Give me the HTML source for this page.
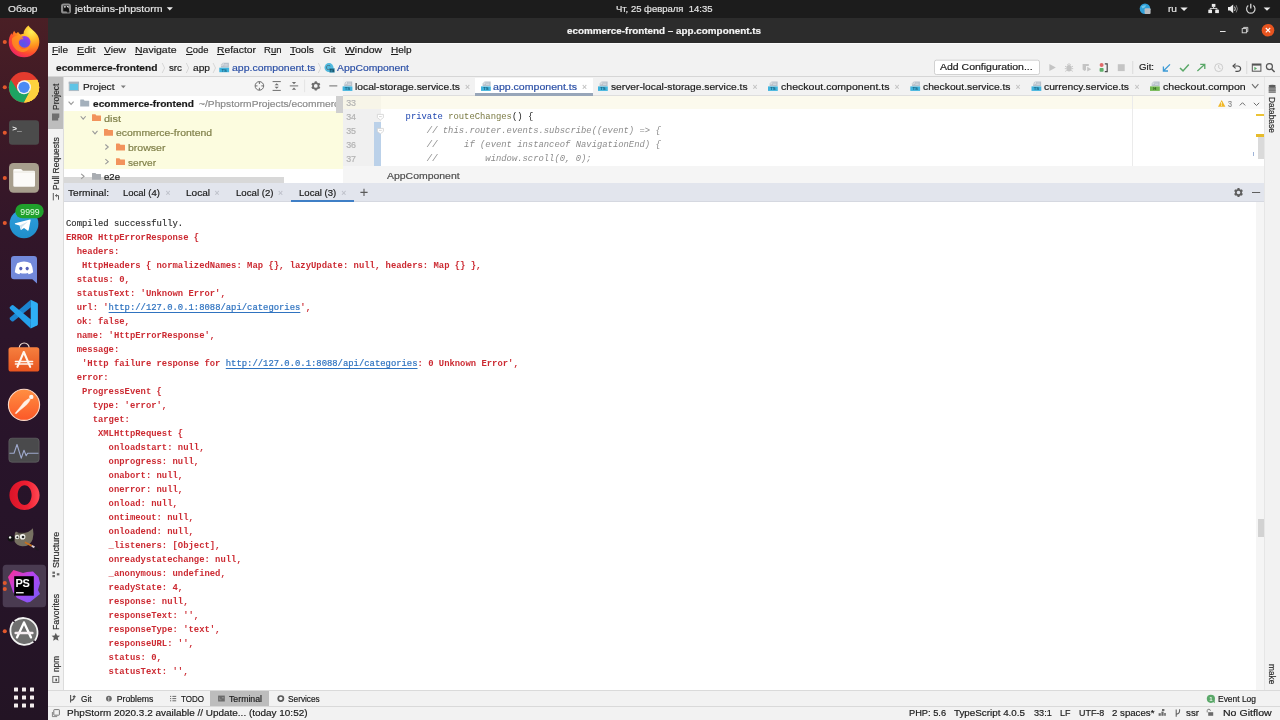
<!DOCTYPE html>
<html><head><meta charset="utf-8">
<style>
html,body{margin:0;padding:0;width:1280px;height:720px;overflow:hidden;background:#f2f2f2;}
body{font-family:"Liberation Sans","DejaVu Sans",sans-serif;font-size:11px;color:#1a1a1a;position:relative;-webkit-text-stroke:0.18px currentColor;}
.a{position:absolute;white-space:nowrap;}
.b{position:absolute;}
svg{position:absolute;overflow:visible;}
u{text-decoration:underline;text-underline-offset:1px;text-decoration-thickness:1px;}
#term{left:66px;top:217px;font-family:"Liberation Mono","DejaVu Sans Mono",monospace;font-weight:bold;font-size:8.89px;line-height:14px;color:#cc2a32;white-space:pre;margin:0;-webkit-text-stroke:0;}
#term .k{color:#2e2e2e;font-weight:normal;-webkit-text-stroke:0.15px #2e2e2e;}
#term .l{color:#2f73c0;font-weight:normal;text-decoration:underline;text-underline-offset:1.5px;-webkit-text-stroke:0.2px #2f73c0;}
#code{left:384.3px;top:110px;font-family:"Liberation Mono","DejaVu Sans Mono",monospace;font-size:8.87px;line-height:14px;color:#1a1a1a;white-space:pre;margin:0;-webkit-text-stroke:0;}
#code .c{color:#8c8c8c;font-style:italic;}
#code .kw{color:#1f46b0;}
#code .fn{color:#7a7a43;}
</style></head><body><div class="b" id="root" style="left:0;top:0;width:1280px;height:720px;overflow:hidden;will-change:transform;">
<div class="b" style="left:0px;top:0px;width:1280.00px;height:18.00px;background:#1c1c1c;"></div>
<div class="b" style="left:0px;top:18px;width:48.00px;height:702.00px;background:linear-gradient(rgb(74,31,37) 0%,rgb(61,25,38) 15%,rgb(50,22,41) 30%,rgb(44,21,42) 45%,rgb(40,20,42) 60%,rgb(38,20,40) 80%,rgb(35,20,36) 100%);"></div>
<div class="b" style="left:48px;top:18px;width:1232.00px;height:24.60px;background:#2c2c2c;"></div>
<div class="b" style="left:48px;top:42.6px;width:1232.00px;height:677.40px;background:#f2f2f2;"></div>
<div class="b" style="left:48px;top:42.6px;width:1232.00px;height:0.70px;background:#fafafa;"></div>
<div class="b" style="left:48px;top:76px;width:1232.00px;height:1.00px;background:#d6d6d6;"></div>
<div class="b" style="left:48px;top:77px;width:15.00px;height:613.30px;background:#f2f2f2;"></div>
<div class="b" style="left:63px;top:77px;width:1.00px;height:613.30px;background:#dcdcdc;"></div>
<div class="b" style="left:48px;top:77px;width:15.00px;height:52.20px;background:#bdbdbd;"></div>
<div class="b" style="left:64px;top:77px;width:278.50px;height:19.00px;background:#f5f5f5;"></div>
<div class="b" style="left:64px;top:96px;width:278.50px;height:87.00px;background:#ffffff;"></div>
<div class="b" style="left:64px;top:110.67px;width:278.50px;height:58.66px;background:#fcfcdf;"></div>
<div class="b" style="left:64px;top:177.4px;width:220.00px;height:5.90px;background:#d8d8d8;"></div>
<div class="b" style="left:342.5px;top:77px;width:0.80px;height:106.00px;background:#dcdcdc;"></div>
<div class="b" style="left:343.3px;top:77px;width:921.70px;height:19.00px;background:#f2f2f2;"></div>
<div class="b" style="left:474.5px;top:77.8px;width:118.00px;height:18.20px;background:#ffffff;"></div>
<div class="b" style="left:343.3px;top:95px;width:921.70px;height:1.00px;background:#dedede;"></div>
<div class="b" style="left:474.5px;top:93px;width:118.00px;height:3.00px;background:#98a6b9;"></div>
<div class="b" style="left:343.3px;top:96px;width:37.70px;height:70.40px;background:#f0f0f0;"></div>
<div class="b" style="left:381px;top:96px;width:883.20px;height:70.40px;background:#ffffff;"></div>
<div class="b" style="left:343.3px;top:96px;width:37.70px;height:13.00px;background:#f7f5e8;"></div>
<div class="b" style="left:381px;top:96px;width:830.00px;height:13.00px;background:#fcfaed;"></div>
<div class="b" style="left:1211px;top:96px;width:53.20px;height:13.00px;background:#f8f8f8;"></div>
<div class="b" style="left:1131.5px;top:96px;width:0.80px;height:70.40px;background:#ebebeb;"></div>
<div class="b" style="left:374.1px;top:122.4px;width:6.50px;height:44.00px;background:#bbd1e9;"></div>
<div class="b" style="left:1255.6px;top:114.3px;width:8.60px;height:1.90px;background:#ecc335;"></div>
<div class="b" style="left:1255.6px;top:134.1px;width:8.60px;height:3.00px;background:#e6bb2b;"></div>
<div class="b" style="left:1258px;top:137.1px;width:6.20px;height:22.20px;background:#dadada;"></div>
<div class="b" style="left:1252.5px;top:151.7px;width:0.80px;height:4.20px;background:#9fb4d8;"></div>
<div class="b" style="left:343.3px;top:166.4px;width:921.70px;height:16.60px;background:#f5f5f5;"></div>
<div class="b" style="left:64px;top:183px;width:1201.00px;height:19.00px;background:#e2e5ed;"></div>
<div class="b" style="left:64px;top:201.3px;width:1201.00px;height:0.70px;background:#d5d8e0;"></div>
<div class="b" style="left:290.5px;top:199.6px;width:63.50px;height:2.40px;background:#3f7fc6;"></div>
<div class="b" style="left:64px;top:202px;width:1191.50px;height:488.30px;background:#ffffff;"></div>
<div class="b" style="left:1255.5px;top:202px;width:8.70px;height:488.30px;background:#f5f5f5;"></div>
<div class="b" style="left:1258px;top:518.7px;width:6.60px;height:18.20px;background:#d2d2d2;"></div>
<div class="b" style="left:1264.2px;top:77px;width:0.80px;height:613.30px;background:#e6e6e6;"></div>
<div class="b" style="left:1265px;top:77px;width:15.00px;height:613.30px;background:#f2f2f2;"></div>
<div class="b" style="left:48px;top:690.2px;width:1232.00px;height:0.80px;background:#dadada;"></div>
<div class="b" style="left:210.2px;top:691px;width:58.80px;height:15.00px;background:#bdbdbd;"></div>
<div class="b" style="left:48px;top:706px;width:1232.00px;height:0.80px;background:#d9d9d9;"></div>
<div class="b" style="left:0;top:0;width:1280px;height:166.5px;overflow:hidden;"><pre class="a" id="code">    <span class="kw">private</span> <span class="fn">routeChanges</span>() {
        <span class="c">// this.router.events.subscribe((event) =&gt; {</span>
        <span class="c">//     if (event instanceof NavigationEnd) {</span>
        <span class="c">//         window.scroll(0, 0);</span></pre></div>
<pre class="a" id="term"><span class="k">Compiled successfully.</span>
ERROR HttpErrorResponse {
  headers:
   HttpHeaders { normalizedNames: Map {}, lazyUpdate: null, headers: Map {} },
  status: 0,
  statusText: 'Unknown Error',
  url: '<span class="l">http://127.0.0.1:8088/api/categories</span>',
  ok: false,
  name: 'HttpErrorResponse',
  message:
   'Http failure response for <span class="l">http://127.0.0.1:8088/api/categories</span>: 0 Unknown Error',
  error:
   ProgressEvent {
     type: 'error',
     target:
      XMLHttpRequest {
        onloadstart: null,
        onprogress: null,
        onabort: null,
        onerror: null,
        onload: null,
        ontimeout: null,
        onloadend: null,
        _listeners: [Object],
        onreadystatechange: null,
        _anonymous: undefined,
        readyState: 4,
        response: null,
        responseText: '',
        responseType: 'text',
        responseURL: '',
        status: 0,
        statusText: '',</pre>
<svg style="left:0px;top:0px" width="48" height="720" viewBox="0 0 48 720">
<defs>
<radialGradient id="ffg" cx="0.74" cy="0.2" r="0.98"><stop offset="0" stop-color="#fff25a"/><stop offset="0.24" stop-color="#ffc42f"/><stop offset="0.48" stop-color="#ff8c1e"/><stop offset="0.7" stop-color="#ff4d2e"/><stop offset="0.88" stop-color="#f02a5c"/><stop offset="1" stop-color="#d81f7c"/></radialGradient>
<radialGradient id="ffp" cx="0.35" cy="0.75" r="0.9"><stop offset="0" stop-color="#5358e8"/><stop offset="0.55" stop-color="#7a44ea"/><stop offset="1" stop-color="#b43ae6"/></radialGradient>
<linearGradient id="tgg" x1="0" y1="0" x2="0" y2="1"><stop offset="0" stop-color="#2f9fdc"/><stop offset="1" stop-color="#1f8fcc"/></linearGradient>
<linearGradient id="usg" x1="0" y1="0" x2="0" y2="1"><stop offset="0" stop-color="#f6803f"/><stop offset="1" stop-color="#e8551f"/></linearGradient>
<linearGradient id="pmg" x1="0" y1="0" x2="0" y2="1"><stop offset="0" stop-color="#ff8f42"/><stop offset="1" stop-color="#fb5828"/></linearGradient>
<linearGradient id="opg" x1="0" y1="0" x2="1" y2="0"><stop offset="0" stop-color="#d81428"/><stop offset="0.6" stop-color="#f02033"/><stop offset="1" stop-color="#ff4a55"/></linearGradient>
<linearGradient id="psg" x1="0" y1="0" x2="1" y2="1"><stop offset="0" stop-color="#ff2f8f"/><stop offset="0.45" stop-color="#b345f1"/><stop offset="1" stop-color="#765af8"/></linearGradient>
</defs>
<!-- firefox -->
<g>
<path d="M28.4 25.4 C30 28 32.5 29.6 34.6 31.8 C36 33.2 37 34.4 37.4 35 C38.8 37.2 39.4 39.6 39.3 42.4 C39 50.8 32.4 57.2 24.2 57.2 C15.6 57.2 8.7 50.6 8.7 42.4 C8.7 38.6 9.8 35.6 11.4 33.2 C11.8 34 12 34.4 12.4 34.8 C12.8 33 13.4 31.8 14.3 30.7 C14.8 32 15.4 32.8 16.2 33.4 C16.8 32.8 17.5 32.4 18.3 32.1 C18.8 33.4 19.6 34.2 20.6 34.6 C21.6 34 22.6 33.8 23.6 33.8 C23.4 31.2 25.2 28 28.4 25.4 Z" fill="url(#ffg)"/>
<circle cx="24.6" cy="41.8" r="5.9" fill="url(#ffp)"/>
<path d="M12 38.4 C15 35.4 19.4 35.2 22 37 C23 37.8 23.4 38.6 23.5 39.4 C22 39.2 20.4 39.6 19.4 40.8 C17.6 43 18.2 46.6 21.4 48.4 C24 49.8 27.4 49 29.6 46.6 C28.8 50.4 25.4 52.6 21.6 52 C16.4 51.2 12.2 46.8 12 41.6 C11.9 40.4 11.9 39.4 12 38.4 Z" fill="#ff9420" opacity="0.75"/>
</g>
<!-- chrome -->
<g>
<circle cx="24" cy="87.3" r="15.2" fill="#e33b2e"/>
<path d="M24 87.3 L37.16 79.7 A15.2 15.2 0 0 1 24.6 102.5 L30.2 90.9 Z" fill="#fdd23e"/>
<path d="M37.16 79.7 A15.2 15.2 0 0 1 24 102.5 L31 91 Z" fill="#fdd23e"/>
<path d="M10.84 79.7 L17.9 91 L24 87.3 L30.2 91.2 L24 102.5 A15.2 15.2 0 0 1 10.84 79.7 Z" fill="#1da462"/>
<path d="M24 80.3 L37.16 79.7 A15.2 15.2 0 0 1 24 102.5 L30.1 90.8 Z" fill="#fdd23e"/>
<circle cx="24" cy="87.3" r="7" fill="#f4f4f4"/>
<circle cx="24" cy="87.3" r="5.6" fill="#4a8af4"/>
</g>
<!-- terminal -->
<g>
<rect x="9" y="120.3" width="30" height="24.4" rx="3.2" fill="#4b4b4b"/>
<text x="12.2" y="130.5" font-family="Liberation Mono,monospace" font-weight="bold" font-size="8" fill="#f2f2f2">&gt;_</text>
</g>
<!-- files -->
<g>
<rect x="9" y="163" width="30" height="29.7" rx="4.5" fill="#a79e8d"/>
<path d="M13.3 170.2 Q13.3 168.9 14.6 168.9 L20.5 168.9 Q21.5 168.9 22.2 170 L22.8 170.8 L33.7 170.8 Q35 170.8 35 172.1 L35 185.4 Q35 186.7 33.7 186.7 L14.6 186.7 Q13.3 186.7 13.3 185.4 Z" fill="#fbfaf8"/>
<path d="M13.3 171.5 L35 171.5 L35 172.6 L13.3 172.6 Z" fill="#e6e1d8" opacity="0.7"/>
</g>
<!-- telegram -->
<g>
<circle cx="24" cy="223.8" r="14.4" fill="url(#tgg)"/>
<path d="M15 223.3 L30 219.6 Q30.8 219.5 30.6 220.4 L28.6 230.2 Q28.3 231 27.5 230.5 L24 227.9 L21.4 229.8 Q20.7 230.1 20.6 229.4 L19.6 225.6 L15.2 224.2 Q14.5 223.7 15 223.3 Z" fill="#ffffff"/>
<path d="M19.6 225.6 L28 221.4 L22.2 226.8 L21.4 229.8 Z" fill="#cfe4f1"/>
<rect x="15.3" y="204" width="28.4" height="14.3" rx="7.1" fill="#20a02c"/>
<text x="30" y="214.9" text-anchor="middle" font-family="Liberation Sans,sans-serif" font-size="8.8" fill="#e2ffe2" textLength="19.4" lengthAdjust="spacingAndGlyphs">9999</text>
</g>
<!-- discord -->
<g>
<path d="M14 256 L34 256 Q37 256 37 259 L37 283.5 L32.3 279.3 L14 279.3 Q11 279.3 11 276.3 L11 259 Q11 256 14 256 Z" fill="#7289da"/>
<path d="M17.2 263.2 Q20.5 261.6 24 261.6 Q27.5 261.6 30.8 263.2 Q33 267 33.2 272.2 Q31.2 273.9 28.6 274.3 L27.9 273 Q26 273.6 24 273.6 Q22 273.6 20.1 273 L19.4 274.3 Q16.8 273.9 14.8 272.2 Q15 267 17.2 263.2 Z" fill="#ffffff"/>
<ellipse cx="20.8" cy="268.6" rx="1.6" ry="1.8" fill="#5560b8"/><ellipse cx="27.2" cy="268.6" rx="1.6" ry="1.8" fill="#5560b8"/>
</g>
<!-- vscode -->
<g>
<path d="M30.7 299.8 L30.9 307.3 L13.2 321.4 Q12.4 321.9 11.6 321.2 L9.9 319.4 Q9.2 318.4 10.1 317.5 Z" fill="#1c84d0"/>
<path d="M30.7 328.4 L30.9 319.6 L13.4 305.2 Q12.6 304.7 11.8 305.3 L9.9 307.1 Q9.2 308 10.1 308.9 Z" fill="#25a0ea"/>
<path d="M30.7 299.8 L37 302.8 Q37.9 303.3 37.9 304.4 L37.9 324 Q37.9 325.1 37 325.6 L30.7 328.4 Z" fill="#2fb0f6"/>
</g>
<!-- ubuntu software -->
<g>
<path d="M19.3 349 L19.3 347.6 A4.9 4.6 0 0 1 29.1 347.6 L29.1 349" fill="none" stroke="#f3dfd2" stroke-width="1.2"/>
<rect x="8.5" y="347.2" width="30.8" height="24.3" rx="2.6" fill="url(#usg)"/>
<path d="M23.8 352 L17.4 366.8 M23.8 352 L30.2 366.8" stroke="#fff6ee" stroke-width="2.1" stroke-linecap="round" fill="none"/>
<path d="M15.4 361.4 L32.6 361.4 M15.4 364 L32.6 364" stroke="#fff6ee" stroke-width="1.5" stroke-linecap="round"/>
</g>
<!-- postman -->
<g>
<circle cx="24" cy="404.8" r="15.6" fill="url(#pmg)" stroke="#fcd9c8" stroke-width="1.1"/>
<path d="M29.2 398.5 L27.0 399.8 L24.1 402.1 L21.6 405.3 L19.1 408.5 L16.8 411.2 L15.2 413.2 L16.0 413.8 L17.8 412.3 L20.5 409.8 L23.7 407.2 L26.8 404.6 L29.0 401.7 L30.2 399.5 Z" fill="#fff1e6" stroke="#fff1e6" stroke-width="0.5" stroke-linejoin="round"/>
<circle cx="31.3" cy="396.9" r="2.2" fill="#fff4ec"/>
</g>
<!-- system monitor -->
<g>
<rect x="8.9" y="438.2" width="30.2" height="24" rx="3" fill="#4a4a4c" stroke="#646466" stroke-width="0.7"/>
<path d="M9.5 453.2 L14 453.2 L17 444.5 L21.2 458.2 L24 450.3 L26.2 455.8 L27.6 453.2 L38.5 453.2" fill="none" stroke="#9fa9cc" stroke-width="1.1" stroke-linejoin="round"/>
</g>
<!-- opera -->
<g>
<path fill-rule="evenodd" d="M24.5 480.6 C33 480.6 39.6 487.1 39.6 495.3 C39.6 503.5 33 510 24.5 510 C16 510 9.4 503.5 9.4 495.3 C9.4 487.1 16 480.6 24.5 480.6 Z M24.6 485.2 C20.6 485.2 17.7 489.6 17.7 495.1 C17.7 500.6 20.6 505 24.6 505 C28.6 505 31.6 500.6 31.6 495.1 C31.6 489.6 28.6 485.2 24.6 485.2 Z" fill="url(#opg)"/>
</g>
<!-- gimp -->
<g>
<path d="M14.6 536 Q14.6 532.4 16 531.6 Q18.4 533.4 22 533.2 Q28.6 533.2 32.9 528.3 Q34.2 534 32.6 539.4 Q30 546.4 22.3 546.2 Q16.4 545.6 14.6 541.4 Z" fill="#777162"/>
<path d="M17 533.4 Q20 531.4 24.4 532.6 Q21 534.6 17 533.4 Z" fill="#3a3630" opacity="0.7"/>
<ellipse cx="11" cy="538.4" rx="3.3" ry="3" fill="#121212"/>
<circle cx="10.1" cy="537.4" r="1.2" fill="#f4f4f4"/>
<circle cx="17.1" cy="537" r="2.2" fill="#eeeeea"/><circle cx="22.6" cy="536.7" r="2.8" fill="#f2f2ee"/>
<circle cx="17.4" cy="537.3" r="1" fill="#2a2a2a"/><circle cx="23" cy="537" r="1.3" fill="#2a2a2a"/>
<path d="M25.2 541.6 L32.2 545 L31.4 546.8 L24.6 543 Z" fill="#c8701e"/>
<path d="M32.2 545 L35 546.4 L34.2 548.2 L31.4 546.8 Z" fill="#d6cdd6"/>
<path d="M35 546.4 L38.6 549.6 Q39 550.8 37.6 550.4 L34.2 548.2 Z" fill="#1c1a20"/>
</g>
<!-- phpstorm -->
<g>
<rect x="2.7" y="564.7" width="43.3" height="42.6" rx="3.5" fill="#4a3b51"/>
<path d="M13.5 570 L23 573 L27 572 L33 571.5 L38.5 577 L40 583 L38 590 L40 594 L30 602 L27 602.5 L17 598 L13 592 L8 577 L11 573 Z" fill="url(#psg)"/>
<rect x="14.2" y="576.2" width="19.6" height="19.5" fill="#000000"/>
<text x="15.5" y="587" font-family="Liberation Sans,sans-serif" font-weight="bold" font-size="11" fill="#ffffff" letter-spacing="-0.3">PS</text>
<rect x="16" y="592.1" width="7.7" height="1.3" fill="#ffffff"/>
</g>
<!-- software updater -->
<g>
<circle cx="24" cy="631.3" r="13.6" fill="#6f6f6f"/>
<path d="M14.6 620.9 A14.3 14.3 0 0 1 34.8 640.7" fill="none" stroke="#f2f2f2" stroke-width="1.8"/>
<path d="M33.4 641.9 A14.3 14.3 0 0 1 13.4 621.8" fill="none" stroke="#f2f2f2" stroke-width="1.8"/>
<path d="M24 622.5 L17 637.4 M24 622.5 L31 637.4" stroke="#ffffff" stroke-width="2.3" stroke-linecap="round" fill="none"/>
<path d="M15.6 633.1 L32.4 633.1" stroke="#f6eef2" stroke-width="2.5" stroke-linecap="round"/>
</g>
<!-- running dots -->
<g fill="#e2582d"><circle cx="4.8" cy="42" r="2.05"/><circle cx="4.8" cy="87.3" r="2.05"/><circle cx="4.8" cy="132.7" r="2.05"/><circle cx="4.8" cy="178" r="2.05"/><circle cx="4.8" cy="223" r="2.05"/><circle cx="4.8" cy="583" r="2.05"/><circle cx="4.8" cy="589" r="2.05"/><circle cx="4.8" cy="631.3" r="2.05"/></g>
<!-- app grid -->
<g fill="#f3eded">
<rect x="14" y="687.5" width="4" height="4" rx="0.5"/><rect x="22" y="687.5" width="4" height="4" rx="0.5"/><rect x="30" y="687.5" width="4" height="4" rx="0.5"/>
<rect x="14" y="695.5" width="4" height="4" rx="0.5"/><rect x="22" y="695.5" width="4" height="4" rx="0.5"/><rect x="30" y="695.5" width="4" height="4" rx="0.5"/>
<rect x="14" y="703.5" width="4" height="4" rx="0.5"/><rect x="22" y="703.5" width="4" height="4" rx="0.5"/><rect x="30" y="703.5" width="4" height="4" rx="0.5"/>
</g>
</svg><svg style="left:0px;top:0px" width="1280" height="720" viewBox="0 0 1280 720"><rect x="61" y="3.6" width="10" height="10" rx="2.6" fill="#8d8d8d"/><rect x="63.2" y="5.6" width="5.8" height="5.8" fill="#111"/><path d="M63.6 6.2 L66 6.2 L65 8.2 Z M66.6 6 L68.6 6 L68.6 8.6 Z" fill="#f2f2f2"/><path d="M66.2 10.8 L69.4 10.8 L69.4 12.6 L67.2 12.6 Z" fill="#1a1a1a"/>
<path d="M166.7 7.2 L172.9 7.2 L169.8 10.6 Z" fill="#ececec"/>
<circle cx="1145" cy="8.8" r="5.3" fill="#2e9fd8"/><path d="M1141.2 6.6 Q1144 4.8 1146.2 5.4 Q1145 7.8 1142.6 8.6 Z" fill="#7fd0ee" opacity="0.8"/><rect x="1144.6" y="8.2" width="6" height="5.8" rx="1" fill="#b9bcc0"/>
<path d="M1180.4 7.4 L1187.7 7.4 L1184.0500000000002 11 Z" fill="#ececec"/>
<g fill="#ececec"><rect x="1211.8" y="3.9" width="3.6" height="3"/><rect x="1208.3" y="9.7" width="3.7" height="3.4"/><rect x="1215.2" y="9.7" width="3.7" height="3.4"/></g><path d="M1213.6 6.8 L1213.6 8.4 M1210.2 9.8 L1210.2 8.4 L1217 8.4 L1217 9.8" stroke="#ececec" stroke-width="0.9" fill="none"/>
<path d="M1228 7 L1230 7 L1233.2 4.4 L1233.2 13.2 L1230 10.6 L1228 10.6 Z" fill="#ececec"/><path d="M1234.6 6.6 Q1236 8.8 1234.6 11" stroke="#ececec" stroke-width="0.9" fill="none"/><path d="M1236.2 5.2 Q1238.6 8.8 1236.2 12.4" stroke="#8a8a8a" stroke-width="0.9" fill="none"/>
<path d="M1248.3 5.6 A4.2 4.2 0 1 0 1253.3 5.6" stroke="#d4d4d4" stroke-width="1.2" fill="none"/><path d="M1250.8 3.8 L1250.8 8.4" stroke="#ececec" stroke-width="1.2"/>
<path d="M1263.6 7.4 L1270.4 7.4 L1267.0 10.8 Z" fill="#ececec"/>
<rect x="1220" y="31" width="5.6" height="1" fill="#e6e6e6"/>
<rect x="1242.2" y="28.6" width="4.2" height="4.2" fill="none" stroke="#dcdcdc" stroke-width="0.9"/><path d="M1243.6 28.4 L1243.6 27.4 L1247.8 27.4 L1247.8 31.6 L1246.6 31.6" fill="none" stroke="#dcdcdc" stroke-width="0.9"/>
<circle cx="1268" cy="30.2" r="6.3" fill="#e8541f"/><path d="M1265.8 28 L1270.2 32.4 M1270.2 28 L1265.8 32.4" stroke="#ffffff" stroke-width="1.1"/>
<path d="M162.20000000000002 63 L164.60000000000002 68 L162.20000000000002 73" fill="none" stroke="#d0d0d0" stroke-width="0.8"/>
<path d="M186.3 63 L188.70000000000002 68 L186.3 73" fill="none" stroke="#d0d0d0" stroke-width="0.8"/>
<path d="M213.1 63 L215.5 68 L213.1 73" fill="none" stroke="#d0d0d0" stroke-width="0.8"/>
<path d="M318.29999999999995 63 L320.7 68 L318.29999999999995 73" fill="none" stroke="#d0d0d0" stroke-width="0.8"/>
<g transform="translate(219.3,62.8)"><path d="M3.6 0 L9.6 0 L9.6 4.6 L1.6 4.6 L1.6 2 Z" fill="#b7c0ca"/><path d="M1.2 2.4 L3.9 2.4 L3.9 0.2" fill="none" stroke="#f2f2f2" stroke-width="0.7"/><path d="M5 1.6 L8.4 1.6 M5 3 L8.4 3" stroke="#dfe4ea" stroke-width="0.6"/><rect x="0" y="4.9" width="9.8" height="4.5" fill="#3fb3dd"/><text x="4.9" y="8.75" text-anchor="middle" font-family="Liberation Sans,sans-serif" font-weight="bold" font-size="4.3" fill="#1b5f7a">TS</text></g>
<circle cx="329" cy="67.6" r="4.5" fill="#4fb9de"/><text x="326" y="70" font-family="Liberation Sans,sans-serif" font-size="6.6" fill="#4a5b68">C</text><rect x="329.4" y="68.2" width="5.2" height="4.4" fill="#2f88aa"/><text x="332" y="71.9" text-anchor="middle" font-family="Liberation Sans,sans-serif" font-weight="bold" font-size="3.6" fill="#0f3a4d">TS</text>
<rect x="934.5" y="60.2" width="105" height="14.3" rx="1.8" fill="#ffffff" stroke="#c6c6c6" stroke-width="0.8"/>
<path d="M1049.4 63.9 L1055.8 67.5 L1049.4 71.1 Z" fill="#c4c4c4"/>
<ellipse cx="1069" cy="68.2" rx="2.6" ry="3.2" fill="#c4c4c4"/><path d="M1067.3 64.6 Q1069 63 1070.7 64.6 M1065 66.2 L1066.6 67 M1073 66.2 L1071.4 67 M1064.8 68.6 L1066.4 68.6 M1073.2 68.6 L1071.6 68.6 M1065.2 71.4 L1066.8 70.4 M1072.8 71.4 L1071.2 70.4" stroke="#c4c4c4" stroke-width="0.9" fill="none"/>
<path d="M1082.6 64 L1088.8 64 L1088.8 66 L1086 66 L1086 70 L1084.6 71 L1082.6 69.4 Z" fill="#c4c4c4"/><path d="M1087.2 66.8 L1091.2 69.2 L1087.2 71.6 Z" fill="#c4c4c4"/>
<circle cx="1101.6" cy="64.9" r="2" fill="#e06a6a"/><rect x="1099.6" y="68" width="4" height="3.8" rx="0.8" fill="#5fae6a"/><path d="M1104.8 63.8 L1107.2 63.8 L1107.2 71.6 L1104.8 71.6" fill="none" stroke="#4a4a4a" stroke-width="1.2"/>
<rect x="1117.8" y="64.2" width="6.9" height="6.9" fill="#c4c4c4"/>
<rect x="1132.4" y="61" width="0.8" height="13" fill="#d4d4d4"/><rect x="1246.4" y="61" width="0.8" height="13" fill="#d4d4d4"/>
<path d="M1170 64.4 L1163.6 70.8 M1163.4 66.4 L1163.4 71 L1168 71" stroke="#3d9bd6" stroke-width="1.3" fill="none"/>
<path d="M1180 68 L1183 70.9 L1188.8 64.6" stroke="#5aa868" stroke-width="1.5" fill="none"/>
<path d="M1197.4 71 L1204.6 64.6 M1200.2 64.4 L1204.8 64.4 L1204.8 69" stroke="#5aa868" stroke-width="1.3" fill="none"/>
<circle cx="1218.7" cy="67.6" r="4" fill="none" stroke="#c6c6c6" stroke-width="0.9"/><path d="M1218.7 65 L1218.7 67.8 L1220.6 68.8" stroke="#c6c6c6" stroke-width="0.9" fill="none"/>
<path d="M1233.4 66 L1238 66 Q1240.8 66.4 1240.6 69 Q1240.2 71.4 1237.4 71.4 L1235.4 71.4" stroke="#4e4e4e" stroke-width="1.2" fill="none"/><path d="M1235.6 63.6 L1233 66 L1235.6 68.4" stroke="#4e4e4e" stroke-width="1.2" fill="none"/>
<rect x="1252.3" y="64" width="8.6" height="7.2" fill="none" stroke="#555" stroke-width="1"/><rect x="1252.3" y="64" width="8.6" height="1.6" fill="#555"/><path d="M1254.4 66.8 L1257 68.5 L1254.4 70.2 Z" fill="#5aa868"/>
<circle cx="1269.4" cy="66.6" r="3" fill="none" stroke="#555" stroke-width="1.2"/><path d="M1271.6 68.9 L1274.6 72" stroke="#555" stroke-width="1.4"/>
<rect x="69.2" y="82.2" width="9.4" height="8.4" fill="#5fc4e6" stroke="#aeb8c1" stroke-width="0.9"/><rect x="68.8" y="81.8" width="10.2" height="2" fill="#a9b4be"/>
<path d="M120.8 85.4 L125.8 85.4 L123.3 88.2 Z" fill="#7d7d7d"/>
<circle cx="259.4" cy="85.9" r="4.3" fill="none" stroke="#6e6e6e" stroke-width="1"/><path d="M259.4 81.6 L259.4 84 M259.4 87.8 L259.4 90.2 M255.1 85.9 L257.5 85.9 M261.3 85.9 L263.7 85.9" stroke="#6e6e6e" stroke-width="1"/>
<path d="M272.6 81.6 L280.8 81.6 M272.6 90.4 L280.8 90.4" stroke="#6e6e6e" stroke-width="1"/><path d="M274.6 85.2 L276.7 83.2 L278.8 85.2 Z M274.6 86.8 L276.7 88.8 L278.8 86.8 Z" fill="#6e6e6e"/>
<path d="M289.8 85.9 L298.2 85.9" stroke="#6e6e6e" stroke-width="1"/><path d="M291.9 82 L294 84.2 L296.1 82 Z M291.9 89.8 L294 87.6 L296.1 89.8 Z" fill="#6e6e6e"/>
<rect x="304.4" y="79.6" width="0.7" height="12.6" fill="#dcdcdc"/>
<path d="M318.14 87.25 L319.78 88.20" stroke="#6e6e6e" stroke-width="2.1"/><path d="M315.80 88.60 L315.80 90.50" stroke="#6e6e6e" stroke-width="2.1"/><path d="M313.46 87.25 L311.82 88.20" stroke="#6e6e6e" stroke-width="2.1"/><path d="M313.46 84.55 L311.82 83.60" stroke="#6e6e6e" stroke-width="2.1"/><path d="M315.80 83.20 L315.80 81.30" stroke="#6e6e6e" stroke-width="2.1"/><path d="M318.14 84.55 L319.78 83.60" stroke="#6e6e6e" stroke-width="2.1"/><circle cx="315.8" cy="85.9" r="2.75" fill="none" stroke="#6e6e6e" stroke-width="1.7"/>
<rect x="329.3" y="85.4" width="8" height="1" fill="#6e6e6e"/>
<path d="M68.6 101.55 L71.1 104.45 L73.6 101.55" fill="none" stroke="#9a9a9a" stroke-width="1.1"/>
<path d="M80.2 99.9 Q80.2 99.5 80.60000000000001 99.5 L83.60000000000001 99.5 L84.60000000000001 100.7 L88.8 100.7 Q89.2 100.7 89.2 101.1 L89.2 106.4 L80.2 106.4 Z" fill="#a4b0bc"/>
<path d="M80.7 116.25 L83.2 119.15 L85.7 116.25" fill="none" stroke="#9a9a9a" stroke-width="1.1"/>
<path d="M92 114.60000000000001 Q92 114.2 92.4 114.2 L95.4 114.2 L96.4 115.4 L100.6 115.4 Q101 115.4 101 115.8 L101 121.10000000000001 L92 121.10000000000001 Z" fill="#f2935c"/>
<path d="M92.5 130.95000000000002 L95 133.85 L97.5 130.95000000000002" fill="none" stroke="#9a9a9a" stroke-width="1.1"/>
<path d="M104 129.3 Q104 128.9 104.4 128.9 L107.4 128.9 L108.4 130.1 L112.6 130.1 Q113 130.1 113 130.5 L113 135.8 L104 135.8 Z" fill="#f2935c"/>
<path d="M105.35 144.5 L108.25 147 L105.35 149.5" fill="none" stroke="#9a9a9a" stroke-width="1.1"/>
<path d="M116 144.0 Q116 143.6 116.4 143.6 L119.4 143.6 L120.4 144.79999999999998 L124.6 144.79999999999998 Q125 144.79999999999998 125 145.2 L125 150.5 L116 150.5 Z" fill="#f2935c"/>
<path d="M105.35 159.2 L108.25 161.7 L105.35 164.2" fill="none" stroke="#9a9a9a" stroke-width="1.1"/>
<path d="M116 158.6 Q116 158.2 116.4 158.2 L119.4 158.2 L120.4 159.39999999999998 L124.6 159.39999999999998 Q125 159.39999999999998 125 159.79999999999998 L125 165.1 L116 165.1 Z" fill="#f2935c"/>
<path d="M81.14999999999999 173.8 L84.05 176.3 L81.14999999999999 178.8" fill="none" stroke="#9a9a9a" stroke-width="1.1"/>
<path d="M92 173.3 Q92 172.9 92.4 172.9 L95.4 172.9 L96.4 174.1 L100.6 174.1 Q101 174.1 101 174.5 L101 179.8 L92 179.8 Z" fill="#a9adb2"/>
<g transform="translate(342.6,81.5)"><path d="M3.6 0 L9.6 0 L9.6 4.6 L1.6 4.6 L1.6 2 Z" fill="#b7c0ca"/><path d="M1.2 2.4 L3.9 2.4 L3.9 0.2" fill="none" stroke="#f2f2f2" stroke-width="0.7"/><path d="M5 1.6 L8.4 1.6 M5 3 L8.4 3" stroke="#dfe4ea" stroke-width="0.6"/><rect x="0" y="4.9" width="9.8" height="4.5" fill="#3fb3dd"/><text x="4.9" y="8.75" text-anchor="middle" font-family="Liberation Sans,sans-serif" font-weight="bold" font-size="4.3" fill="#1b5f7a">TS</text></g>
<g transform="translate(481,81.5)"><path d="M3.6 0 L9.6 0 L9.6 4.6 L1.6 4.6 L1.6 2 Z" fill="#b7c0ca"/><path d="M1.2 2.4 L3.9 2.4 L3.9 0.2" fill="none" stroke="#f2f2f2" stroke-width="0.7"/><path d="M5 1.6 L8.4 1.6 M5 3 L8.4 3" stroke="#dfe4ea" stroke-width="0.6"/><rect x="0" y="4.9" width="9.8" height="4.5" fill="#3fb3dd"/><text x="4.9" y="8.75" text-anchor="middle" font-family="Liberation Sans,sans-serif" font-weight="bold" font-size="4.3" fill="#1b5f7a">TS</text></g>
<g transform="translate(598,81.5)"><path d="M3.6 0 L9.6 0 L9.6 4.6 L1.6 4.6 L1.6 2 Z" fill="#b7c0ca"/><path d="M1.2 2.4 L3.9 2.4 L3.9 0.2" fill="none" stroke="#f2f2f2" stroke-width="0.7"/><path d="M5 1.6 L8.4 1.6 M5 3 L8.4 3" stroke="#dfe4ea" stroke-width="0.6"/><rect x="0" y="4.9" width="9.8" height="4.5" fill="#3fb3dd"/><text x="4.9" y="8.75" text-anchor="middle" font-family="Liberation Sans,sans-serif" font-weight="bold" font-size="4.3" fill="#1b5f7a">TS</text></g>
<g transform="translate(768,81.5)"><path d="M3.6 0 L9.6 0 L9.6 4.6 L1.6 4.6 L1.6 2 Z" fill="#b7c0ca"/><path d="M1.2 2.4 L3.9 2.4 L3.9 0.2" fill="none" stroke="#f2f2f2" stroke-width="0.7"/><path d="M5 1.6 L8.4 1.6 M5 3 L8.4 3" stroke="#dfe4ea" stroke-width="0.6"/><rect x="0" y="4.9" width="9.8" height="4.5" fill="#3fb3dd"/><text x="4.9" y="8.75" text-anchor="middle" font-family="Liberation Sans,sans-serif" font-weight="bold" font-size="4.3" fill="#1b5f7a">TS</text></g>
<g transform="translate(910.3,81.5)"><path d="M3.6 0 L9.6 0 L9.6 4.6 L1.6 4.6 L1.6 2 Z" fill="#b7c0ca"/><path d="M1.2 2.4 L3.9 2.4 L3.9 0.2" fill="none" stroke="#f2f2f2" stroke-width="0.7"/><path d="M5 1.6 L8.4 1.6 M5 3 L8.4 3" stroke="#dfe4ea" stroke-width="0.6"/><rect x="0" y="4.9" width="9.8" height="4.5" fill="#3fb3dd"/><text x="4.9" y="8.75" text-anchor="middle" font-family="Liberation Sans,sans-serif" font-weight="bold" font-size="4.3" fill="#1b5f7a">TS</text></g>
<g transform="translate(1031.5,81.5)"><path d="M3.6 0 L9.6 0 L9.6 4.6 L1.6 4.6 L1.6 2 Z" fill="#b7c0ca"/><path d="M1.2 2.4 L3.9 2.4 L3.9 0.2" fill="none" stroke="#f2f2f2" stroke-width="0.7"/><path d="M5 1.6 L8.4 1.6 M5 3 L8.4 3" stroke="#dfe4ea" stroke-width="0.6"/><rect x="0" y="4.9" width="9.8" height="4.5" fill="#3fb3dd"/><text x="4.9" y="8.75" text-anchor="middle" font-family="Liberation Sans,sans-serif" font-weight="bold" font-size="4.3" fill="#1b5f7a">TS</text></g>
<g transform="translate(1150,81.5)"><path d="M3.6 0 L9.6 0 L9.6 4.6 L1.6 4.6 L1.6 2 Z" fill="#b7c0ca"/><path d="M1.2 2.4 L3.9 2.4 L3.9 0.2" fill="none" stroke="#f2f2f2" stroke-width="0.7"/><path d="M5 1.6 L8.4 1.6 M5 3 L8.4 3" stroke="#dfe4ea" stroke-width="0.6"/><rect x="0" y="4.9" width="9.8" height="4.5" fill="#70b64f"/><text x="4.9" y="8.75" text-anchor="middle" font-family="Liberation Sans,sans-serif" font-weight="bold" font-size="4.3" fill="#2d5e1c">H</text></g>
<path d="M1252.0 84.2 L1255.2 87.8 L1258.4 84.2" fill="none" stroke="#6e6e6e" stroke-width="1.1"/>
<path d="M377.4 114.4 L383.4 114.4 L383.4 117.6 L380.4 120 L377.4 117.6 Z" fill="#ffffff" stroke="#d2d2d2" stroke-width="0.8"/><path d="M379 116.6 L381.8 116.6" stroke="#c8c8c8" stroke-width="0.7"/>
<path d="M377.4 128.4 L383.4 128.4 L383.4 131.4 L380.4 133.8 L377.4 131.4 Z" fill="#ffffff" stroke="#d2d2d2" stroke-width="0.8"/><path d="M379 130.4 L381.8 130.4" stroke="#c8c8c8" stroke-width="0.7"/>
<path d="M1221.7 100 L1225.4 106.8 L1218 106.8 Z" fill="#f0b727"/><text x="1221.7" y="106.3" text-anchor="middle" font-family="Liberation Sans,sans-serif" font-weight="bold" font-size="5" fill="#fff8e0">!</text>
<path d="M1239.8 105.4 L1242.5 102.7 L1245.2 105.4" fill="none" stroke="#6e6e6e" stroke-width="1"/>
<path d="M1253.8 102.8 L1256.5 105.5 L1259.2 102.8" fill="none" stroke="#6e6e6e" stroke-width="1"/>
<path d="M360.4 192.4 L367.6 192.4 M364 188.8 L364 196" stroke="#5a5a5a" stroke-width="1.1"/>
<path d="M1240.75 193.80 L1242.40 194.75" stroke="#5e5e5e" stroke-width="2.1"/><path d="M1238.50 195.10 L1238.50 197.00" stroke="#5e5e5e" stroke-width="2.1"/><path d="M1236.25 193.80 L1234.60 194.75" stroke="#5e5e5e" stroke-width="2.1"/><path d="M1236.25 191.20 L1234.60 190.25" stroke="#5e5e5e" stroke-width="2.1"/><path d="M1238.50 189.90 L1238.50 188.00" stroke="#5e5e5e" stroke-width="2.1"/><path d="M1240.75 191.20 L1242.40 190.25" stroke="#5e5e5e" stroke-width="2.1"/><circle cx="1238.5" cy="192.5" r="2.6500000000000004" fill="none" stroke="#5e5e5e" stroke-width="1.7"/>
<rect x="1252" y="192" width="8.2" height="1" fill="#5e5e5e"/>
<g fill="#5c5c5c"><ellipse cx="1272.2" cy="86" rx="3.6" ry="1.3"/><rect x="1268.6" y="87.2" width="7.2" height="1.5"/><rect x="1268.6" y="89.3" width="7.2" height="1.5"/><rect x="1268.6" y="91.4" width="7.2" height="1.3"/></g>
<path d="M52 113.4 L59.3 113.4 L59.3 117.4 L58.2 118.2 L58.2 120.4 L52 120.4 Z" fill="#6e6e6e"/>
<path d="M53.3 193 L53.3 200.4 M58.5 195.6 L58.5 199.7 M58.5 195.6 L55.6 195.6 M56.8 194.3 L55.4 195.6 L56.8 196.9" stroke="#5a5a5a" stroke-width="1" fill="none"/>
<g fill="#6a6a6a"><rect x="52.4" y="571.6" width="2.6" height="2.2"/><rect x="52.4" y="575" width="2.6" height="2.2"/><rect x="56.8" y="573.2" width="2.6" height="2.2"/></g>
<path d="M55.8 632.8 L57 635.6 L60 635.8 L57.7 637.8 L58.5 640.8 L55.8 639.2 L53.1 640.8 L53.9 637.8 L51.6 635.8 L54.6 635.6 Z" fill="#5a5a5a"/>
<rect x="52.8" y="676.4" width="6" height="6" fill="none" stroke="#5a5a5a" stroke-width="0.9"/><rect x="55.4" y="678.6" width="1.6" height="2.6" fill="#5a5a5a"/>
<path d="M70.6 695 L70.6 702.4 M70.8 700.2 Q74 700.2 74.2 697.6 M72.8 696.6 L75.6 696.6 M74.2 695.2 L74.2 698" stroke="#505050" stroke-width="1.05" fill="none"/>
<circle cx="108.9" cy="698.6" r="2.9" fill="#6a6a6a"/><text x="108.9" y="700.5" text-anchor="middle" font-family="Liberation Sans,sans-serif" font-weight="bold" font-size="5" fill="#f2f2f2">!</text>
<path d="M170 696.4 L171.2 696.4 M172.4 696.4 L176.2 696.4 M170 698.6 L171.2 698.6 M172.4 698.6 L176.2 698.6 M170 700.8 L171.2 700.8 M172.4 700.8 L176.2 700.8" stroke="#5a5a5a" stroke-width="0.9"/>
<rect x="218.1" y="695.6" width="6.7" height="5.9" fill="#6a6a6a"/><path d="M219.6 697.4 L219.6 699.8 L221.4 699.8" stroke="#9a9a9a" stroke-width="0.7" fill="none"/><rect x="221.8" y="697" width="2" height="1.4" fill="#8e8e8e"/>
<circle cx="280.8" cy="698.6" r="2.6" fill="none" stroke="#5a5a5a" stroke-width="1.7"/>
<circle cx="1210.9" cy="698.8" r="4.1" fill="#5aa869"/><path d="M1212.4 701.6 L1215 703.2 L1214.4 700 Z" fill="#5aa869"/><text x="1210.9" y="701" text-anchor="middle" font-family="Liberation Sans,sans-serif" font-weight="bold" font-size="6" fill="#eaf6ea">1</text>
<rect x="53.8" y="709.6" width="5.6" height="5.6" rx="0.6" fill="none" stroke="#6a6a6a" stroke-width="0.9"/><path d="M52.4 712 L52.4 716.6 L57.2 716.6" stroke="#6a6a6a" stroke-width="0.8" fill="none"/>
<g fill="#6a6a6a"><rect x="1158.6" y="713.2" width="2.2" height="2.6"/><rect x="1161.4" y="711.6" width="2.2" height="4.2"/><rect x="1162" y="709" width="2.4" height="2"/><rect x="1164.2" y="713" width="1.6" height="2.8"/></g>
<path d="M1176.2 709.4 L1176.2 716.8 M1176.4 714.2 Q1179.6 714 1179.6 710.6 M1179.6 709.2 L1179.6 710.8" stroke="#5e5e5e" stroke-width="1.05" fill="none"/>
<rect x="1208.2" y="712.2" width="5" height="3.6" fill="#6a6a6a"/><path d="M1207.2 712.4 L1207.2 710.6 Q1207.4 709 1209 709.2 Q1210.4 709.4 1210.4 710.8" stroke="#6a6a6a" stroke-width="0.8" fill="none"/></svg>
<span class="a" style="left:8.00px;top:1.00px;font-size:8.8px;line-height:16px;color:#e4e4e4;transform-origin:0 11px;transform:scaleX(1.1604);">Обзор</span>
<span class="a" style="left:75.00px;top:1.00px;font-size:8.8px;line-height:16px;color:#e4e4e4;transform-origin:0 11px;transform:scaleX(1.2009);">jetbrains-phpstorm</span>
<span class="a" style="left:616.20px;top:1.00px;font-size:8.8px;line-height:16px;color:#e4e4e4;transform-origin:0 11px;transform:scaleX(1.0792);">Чт, 25 февраля&nbsp; 14:35</span>
<span class="a" style="left:1167.50px;top:1.00px;font-size:8.8px;line-height:16px;color:#e4e4e4;transform-origin:0 11px;transform:scaleX(1.1497);">ru</span>
<span class="a" style="left:567.00px;top:23.00px;font-size:9.2px;line-height:16px;color:#f4f4f4;font-weight:bold;transform-origin:0 11px;transform:scaleX(1.0735);">ecommerce-frontend – app.component.ts</span>
<span class="a" style="left:52.00px;top:42.00px;font-size:9.2px;line-height:16px;color:#1a1a1a;transform-origin:0 11px;transform:scaleX(1.0790);"><u>F</u>ile</span>
<span class="a" style="left:76.50px;top:42.00px;font-size:9.2px;line-height:16px;color:#1a1a1a;transform-origin:0 11px;transform:scaleX(1.1665);"><u>E</u>dit</span>
<span class="a" style="left:104.00px;top:42.00px;font-size:9.2px;line-height:16px;color:#1a1a1a;transform-origin:0 11px;transform:scaleX(1.1130);"><u>V</u>iew</span>
<span class="a" style="left:135.00px;top:42.00px;font-size:9.2px;line-height:16px;color:#1a1a1a;transform-origin:0 11px;transform:scaleX(1.1438);"><u>N</u>avigate</span>
<span class="a" style="left:185.50px;top:42.00px;font-size:9.2px;line-height:16px;color:#1a1a1a;transform-origin:0 11px;transform:scaleX(1.0235);"><u>C</u>ode</span>
<span class="a" style="left:216.50px;top:42.00px;font-size:9.2px;line-height:16px;color:#1a1a1a;transform-origin:0 11px;transform:scaleX(1.1228);"><u>R</u>efactor</span>
<span class="a" style="left:264.00px;top:42.00px;font-size:9.2px;line-height:16px;color:#1a1a1a;transform-origin:0 11px;transform:scaleX(1.0361);">R<u>u</u>n</span>
<span class="a" style="left:290.00px;top:42.00px;font-size:9.2px;line-height:16px;color:#1a1a1a;transform-origin:0 11px;transform:scaleX(1.1187);"><u>T</u>ools</span>
<span class="a" style="left:322.80px;top:42.00px;font-size:9.2px;line-height:16px;color:#1a1a1a;transform-origin:0 11px;transform:scaleX(1.0723);">Git</span>
<span class="a" style="left:344.75px;top:42.00px;font-size:9.2px;line-height:16px;color:#1a1a1a;transform-origin:0 11px;transform:scaleX(1.1365);"><u>W</u>indow</span>
<span class="a" style="left:390.90px;top:42.00px;font-size:9.2px;line-height:16px;color:#1a1a1a;transform-origin:0 11px;transform:scaleX(1.0896);"><u>H</u>elp</span>
<span class="a" style="left:56.00px;top:60.00px;font-size:9.2px;line-height:16px;color:#1a1a1a;font-weight:bold;transform-origin:0 11px;transform:scaleX(1.1106);">ecommerce-frontend</span>
<span class="a" style="left:169.00px;top:60.00px;font-size:9.2px;line-height:16px;color:#1a1a1a;transform-origin:0 11px;transform:scaleX(1.0612);">src</span>
<span class="a" style="left:192.50px;top:60.00px;font-size:9.2px;line-height:16px;color:#1a1a1a;transform-origin:0 11px;transform:scaleX(1.1079);">app</span>
<span class="a" style="left:231.50px;top:60.00px;font-size:9.2px;line-height:16px;color:#2c50a6;transform-origin:0 11px;transform:scaleX(1.1404);">app.component.ts</span>
<span class="a" style="left:337.00px;top:60.00px;font-size:9.2px;line-height:16px;color:#2c50a6;transform-origin:0 11px;transform:scaleX(1.1275);">AppComponent</span>
<span class="a" style="left:940.30px;top:59.00px;font-size:9.2px;line-height:16px;color:#1a1a1a;transform-origin:0 11px;transform:scaleX(1.1414);">Add Configuration...</span>
<span class="a" style="left:1139.40px;top:59.00px;font-size:9.2px;line-height:16px;color:#1a1a1a;transform-origin:0 11px;transform:scaleX(1.0492);">Git:</span>
<span class="a" style="left:82.50px;top:79.00px;font-size:9.2px;line-height:16px;color:#1a1a1a;transform-origin:0 11px;transform:scaleX(1.1010);">Project</span>
<span class="a" style="left:92.50px;top:96.00px;font-size:9.2px;line-height:16px;color:#1a1a1a;font-weight:bold;transform-origin:0 11px;transform:scaleX(1.1051);">ecommerce-frontend</span>
<span class="a" style="left:198.75px;top:96.00px;font-size:9.2px;line-height:16px;color:#8a8a8a;transform-origin:0 11px;transform:scaleX(1.1143);">~/PhpstormProjects/ecommerc</span>
<span class="a" style="left:104.00px;top:111.00px;font-size:9.2px;line-height:16px;color:#7f7f48;transform-origin:0 11px;transform:scaleX(1.1878);">dist</span>
<span class="a" style="left:116.00px;top:125.00px;font-size:9.2px;line-height:16px;color:#7f7f48;transform-origin:0 11px;transform:scaleX(1.1325);">ecommerce-frontend</span>
<span class="a" style="left:128.00px;top:140.00px;font-size:9.2px;line-height:16px;color:#7f7f48;transform-origin:0 11px;transform:scaleX(1.1472);">browser</span>
<span class="a" style="left:128.00px;top:155.00px;font-size:9.2px;line-height:16px;color:#7f7f48;transform-origin:0 11px;transform:scaleX(1.0967);">server</span>
<span class="a" style="left:104.00px;top:169.00px;font-size:9.2px;line-height:16px;color:#1a1a1a;transform-origin:0 11px;transform:scaleX(1.0428);">e2e</span>
<span class="a" style="left:354.50px;top:79.00px;font-size:9.2px;line-height:16px;color:#1a1a1a;transform-origin:0 11px;transform:scaleX(1.1176);">local-storage.service.ts</span>
<span class="a" style="left:493.00px;top:79.00px;font-size:9.2px;line-height:16px;color:#2c50a6;transform-origin:0 11px;transform:scaleX(1.1499);">app.component.ts</span>
<span class="a" style="left:610.50px;top:79.00px;font-size:9.2px;line-height:16px;color:#1a1a1a;transform-origin:0 11px;transform:scaleX(1.1139);">server-local-storage.service.ts</span>
<span class="a" style="left:780.75px;top:79.00px;font-size:9.2px;line-height:16px;color:#1a1a1a;transform-origin:0 11px;transform:scaleX(1.1483);">checkout.component.ts</span>
<span class="a" style="left:922.80px;top:79.00px;font-size:9.2px;line-height:16px;color:#1a1a1a;transform-origin:0 11px;transform:scaleX(1.1198);">checkout.service.ts</span>
<span class="a" style="left:1044.00px;top:79.00px;font-size:9.2px;line-height:16px;color:#1a1a1a;transform-origin:0 11px;transform:scaleX(1.1198);">currency.service.ts</span>
<div class="b" style="left:0;top:0;width:1245.3px;height:720px;overflow:hidden;"><span class="a" style="left:1162.80px;top:79.00px;font-size:9.2px;line-height:16px;color:#1a1a1a;transform-origin:0 11px;transform:scaleX(1.1483);">checkout.component.ts</span></div>
<span class="a" style="left:465.10px;top:79.00px;font-size:8.6px;line-height:16px;color:#c0c0c0;">×</span>
<span class="a" style="left:582.10px;top:79.00px;font-size:8.6px;line-height:16px;color:#c0c0c0;">×</span>
<span class="a" style="left:752.60px;top:79.00px;font-size:8.6px;line-height:16px;color:#c0c0c0;">×</span>
<span class="a" style="left:894.60px;top:79.00px;font-size:8.6px;line-height:16px;color:#c0c0c0;">×</span>
<span class="a" style="left:1015.40px;top:79.00px;font-size:8.6px;line-height:16px;color:#c0c0c0;">×</span>
<span class="a" style="left:1134.60px;top:79.00px;font-size:8.6px;line-height:16px;color:#c0c0c0;">×</span>
<span class="a" style="left:346.20px;top:95.00px;font-size:8.87px;line-height:16px;color:#b2b2b2;font-family:"Liberation Mono","DejaVu Sans Mono",monospace;transform-origin:0 10px;transform:scaleX(0.9331);">33</span>
<span class="a" style="left:346.20px;top:109.00px;font-size:8.87px;line-height:16px;color:#b2b2b2;font-family:"Liberation Mono","DejaVu Sans Mono",monospace;transform-origin:0 10px;transform:scaleX(0.9331);">34</span>
<span class="a" style="left:346.20px;top:123.00px;font-size:8.87px;line-height:16px;color:#b2b2b2;font-family:"Liberation Mono","DejaVu Sans Mono",monospace;transform-origin:0 10px;transform:scaleX(0.9331);">35</span>
<span class="a" style="left:346.20px;top:137.00px;font-size:8.87px;line-height:16px;color:#b2b2b2;font-family:"Liberation Mono","DejaVu Sans Mono",monospace;transform-origin:0 10px;transform:scaleX(0.9331);">36</span>
<span class="a" style="left:346.20px;top:151.00px;font-size:8.87px;line-height:16px;color:#b2b2b2;font-family:"Liberation Mono","DejaVu Sans Mono",monospace;transform-origin:0 10px;transform:scaleX(0.9331);">37</span>
<span class="a" style="left:386.90px;top:168.00px;font-size:9.2px;line-height:16px;color:#4d4d4d;transform-origin:0 11px;transform:scaleX(1.1369);">AppComponent</span>
<span class="a" style="left:1228.40px;top:96.00px;font-size:8.6px;line-height:16px;color:#8a8a8a;transform-origin:0 11px;transform:scaleX(0.8366);">3</span>
<span class="a" style="left:68.00px;top:185.00px;font-size:9.2px;line-height:16px;color:#1a1a1a;transform-origin:0 11px;transform:scaleX(1.0997);">Terminal:</span>
<span class="a" style="left:123.00px;top:185.00px;font-size:9.2px;line-height:16px;color:#1a1a1a;transform-origin:0 11px;transform:scaleX(1.0350);">Local (4)</span>
<span class="a" style="left:186.00px;top:185.00px;font-size:9.2px;line-height:16px;color:#1a1a1a;transform-origin:0 11px;transform:scaleX(1.0925);">Local</span>
<span class="a" style="left:235.50px;top:185.00px;font-size:9.2px;line-height:16px;color:#1a1a1a;transform-origin:0 11px;transform:scaleX(1.0490);">Local (2)</span>
<span class="a" style="left:298.75px;top:185.00px;font-size:9.2px;line-height:16px;color:#1a1a1a;transform-origin:0 11px;transform:scaleX(1.0420);">Local (3)</span>
<span class="a" style="left:165.60px;top:185.00px;font-size:8.6px;line-height:16px;color:#bcbfc8;">×</span>
<span class="a" style="left:214.60px;top:185.00px;font-size:8.6px;line-height:16px;color:#bcbfc8;">×</span>
<span class="a" style="left:278.10px;top:185.00px;font-size:8.6px;line-height:16px;color:#bcbfc8;">×</span>
<span class="a" style="left:341.35px;top:185.00px;font-size:8.6px;line-height:16px;color:#bcbfc8;">×</span>
<span class="a" style="left:58.90px;top:99.00px;font-size:8.8px;line-height:16px;color:#2b2b2b;transform-origin:0 11px;transform:rotate(-90deg) scaleX(0.9675);">Project</span>
<span class="a" style="left:58.90px;top:179.00px;font-size:8.8px;line-height:16px;color:#2b2b2b;transform-origin:0 11px;transform:rotate(-90deg) scaleX(0.9709);">Pull Requests</span>
<span class="a" style="left:58.90px;top:556.50px;font-size:8.8px;line-height:16px;color:#2b2b2b;transform-origin:0 11px;transform:rotate(-90deg) scaleX(1.0153);">Structure</span>
<span class="a" style="left:58.90px;top:619.00px;font-size:8.8px;line-height:16px;color:#2b2b2b;transform-origin:0 11px;transform:rotate(-90deg);">Favorites</span>
<span class="a" style="left:58.90px;top:660.80px;font-size:8.8px;line-height:16px;color:#2b2b2b;transform-origin:0 11px;transform:rotate(-90deg) scaleX(0.9343);">npm</span>
<span class="a" style="left:1268.70px;top:86.00px;font-size:8.8px;line-height:16px;color:#2b2b2b;transform-origin:0 11px;transform:rotate(90deg) scaleX(0.9503);">Database</span>
<span class="a" style="left:1268.70px;top:652.70px;font-size:8.8px;line-height:16px;color:#2b2b2b;transform-origin:0 11px;transform:rotate(90deg) scaleX(0.9412);">make</span>
<span class="a" style="left:80.50px;top:691.00px;font-size:8.7px;line-height:16px;color:#1a1a1a;transform-origin:0 11px;transform:scaleX(0.9451);">Git</span>
<span class="a" style="left:116.75px;top:691.00px;font-size:8.7px;line-height:16px;color:#1a1a1a;">Problems</span>
<span class="a" style="left:180.50px;top:691.00px;font-size:8.7px;line-height:16px;color:#1a1a1a;transform-origin:0 11px;transform:scaleX(0.9217);">TODO</span>
<span class="a" style="left:229.25px;top:691.00px;font-size:8.7px;line-height:16px;color:#1a1a1a;transform-origin:0 11px;transform:scaleX(1.0052);">Terminal</span>
<span class="a" style="left:288.00px;top:691.00px;font-size:8.7px;line-height:16px;color:#1a1a1a;transform-origin:0 11px;transform:scaleX(0.9531);">Services</span>
<span class="a" style="left:1218.30px;top:691.00px;font-size:8.7px;line-height:16px;color:#1a1a1a;transform-origin:0 11px;transform:scaleX(0.9712);">Event Log</span>
<span class="a" style="left:66.75px;top:705.00px;font-size:9.4px;line-height:16px;color:#1a1a1a;transform-origin:0 11px;transform:scaleX(1.0609);">PhpStorm 2020.3.2 available // Update... (today 10:52)</span>
<span class="a" style="left:908.90px;top:705.00px;font-size:9.4px;line-height:16px;color:#1a1a1a;transform-origin:0 11px;transform:scaleX(0.9885);">PHP: 5.6</span>
<span class="a" style="left:954.30px;top:705.00px;font-size:9.4px;line-height:16px;color:#1a1a1a;transform-origin:0 11px;transform:scaleX(1.0480);">TypeScript 4.0.5</span>
<span class="a" style="left:1033.60px;top:705.00px;font-size:9.4px;line-height:16px;color:#1a1a1a;transform-origin:0 11px;transform:scaleX(0.9753);">33:1</span>
<span class="a" style="left:1060.10px;top:705.00px;font-size:9.4px;line-height:16px;color:#1a1a1a;transform-origin:0 11px;transform:scaleX(0.9586);">LF</span>
<span class="a" style="left:1079.00px;top:705.00px;font-size:9.4px;line-height:16px;color:#1a1a1a;transform-origin:0 11px;transform:scaleX(0.9525);">UTF-8</span>
<span class="a" style="left:1112.30px;top:705.00px;font-size:9.4px;line-height:16px;color:#1a1a1a;transform-origin:0 11px;transform:scaleX(1.0298);">2 spaces*</span>
<span class="a" style="left:1186.00px;top:705.00px;font-size:9.4px;line-height:16px;color:#1a1a1a;transform-origin:0 11px;transform:scaleX(1.0400);">ssr</span>
<span class="a" style="left:1223.00px;top:705.00px;font-size:9.4px;line-height:16px;color:#1a1a1a;transform-origin:0 11px;transform:scaleX(1.1260);">No Gitflow</span>
<div class="b" style="left:335.5px;top:96px;width:7.00px;height:16.50px;background:#cfcfcf;"></div></div></body></html>
